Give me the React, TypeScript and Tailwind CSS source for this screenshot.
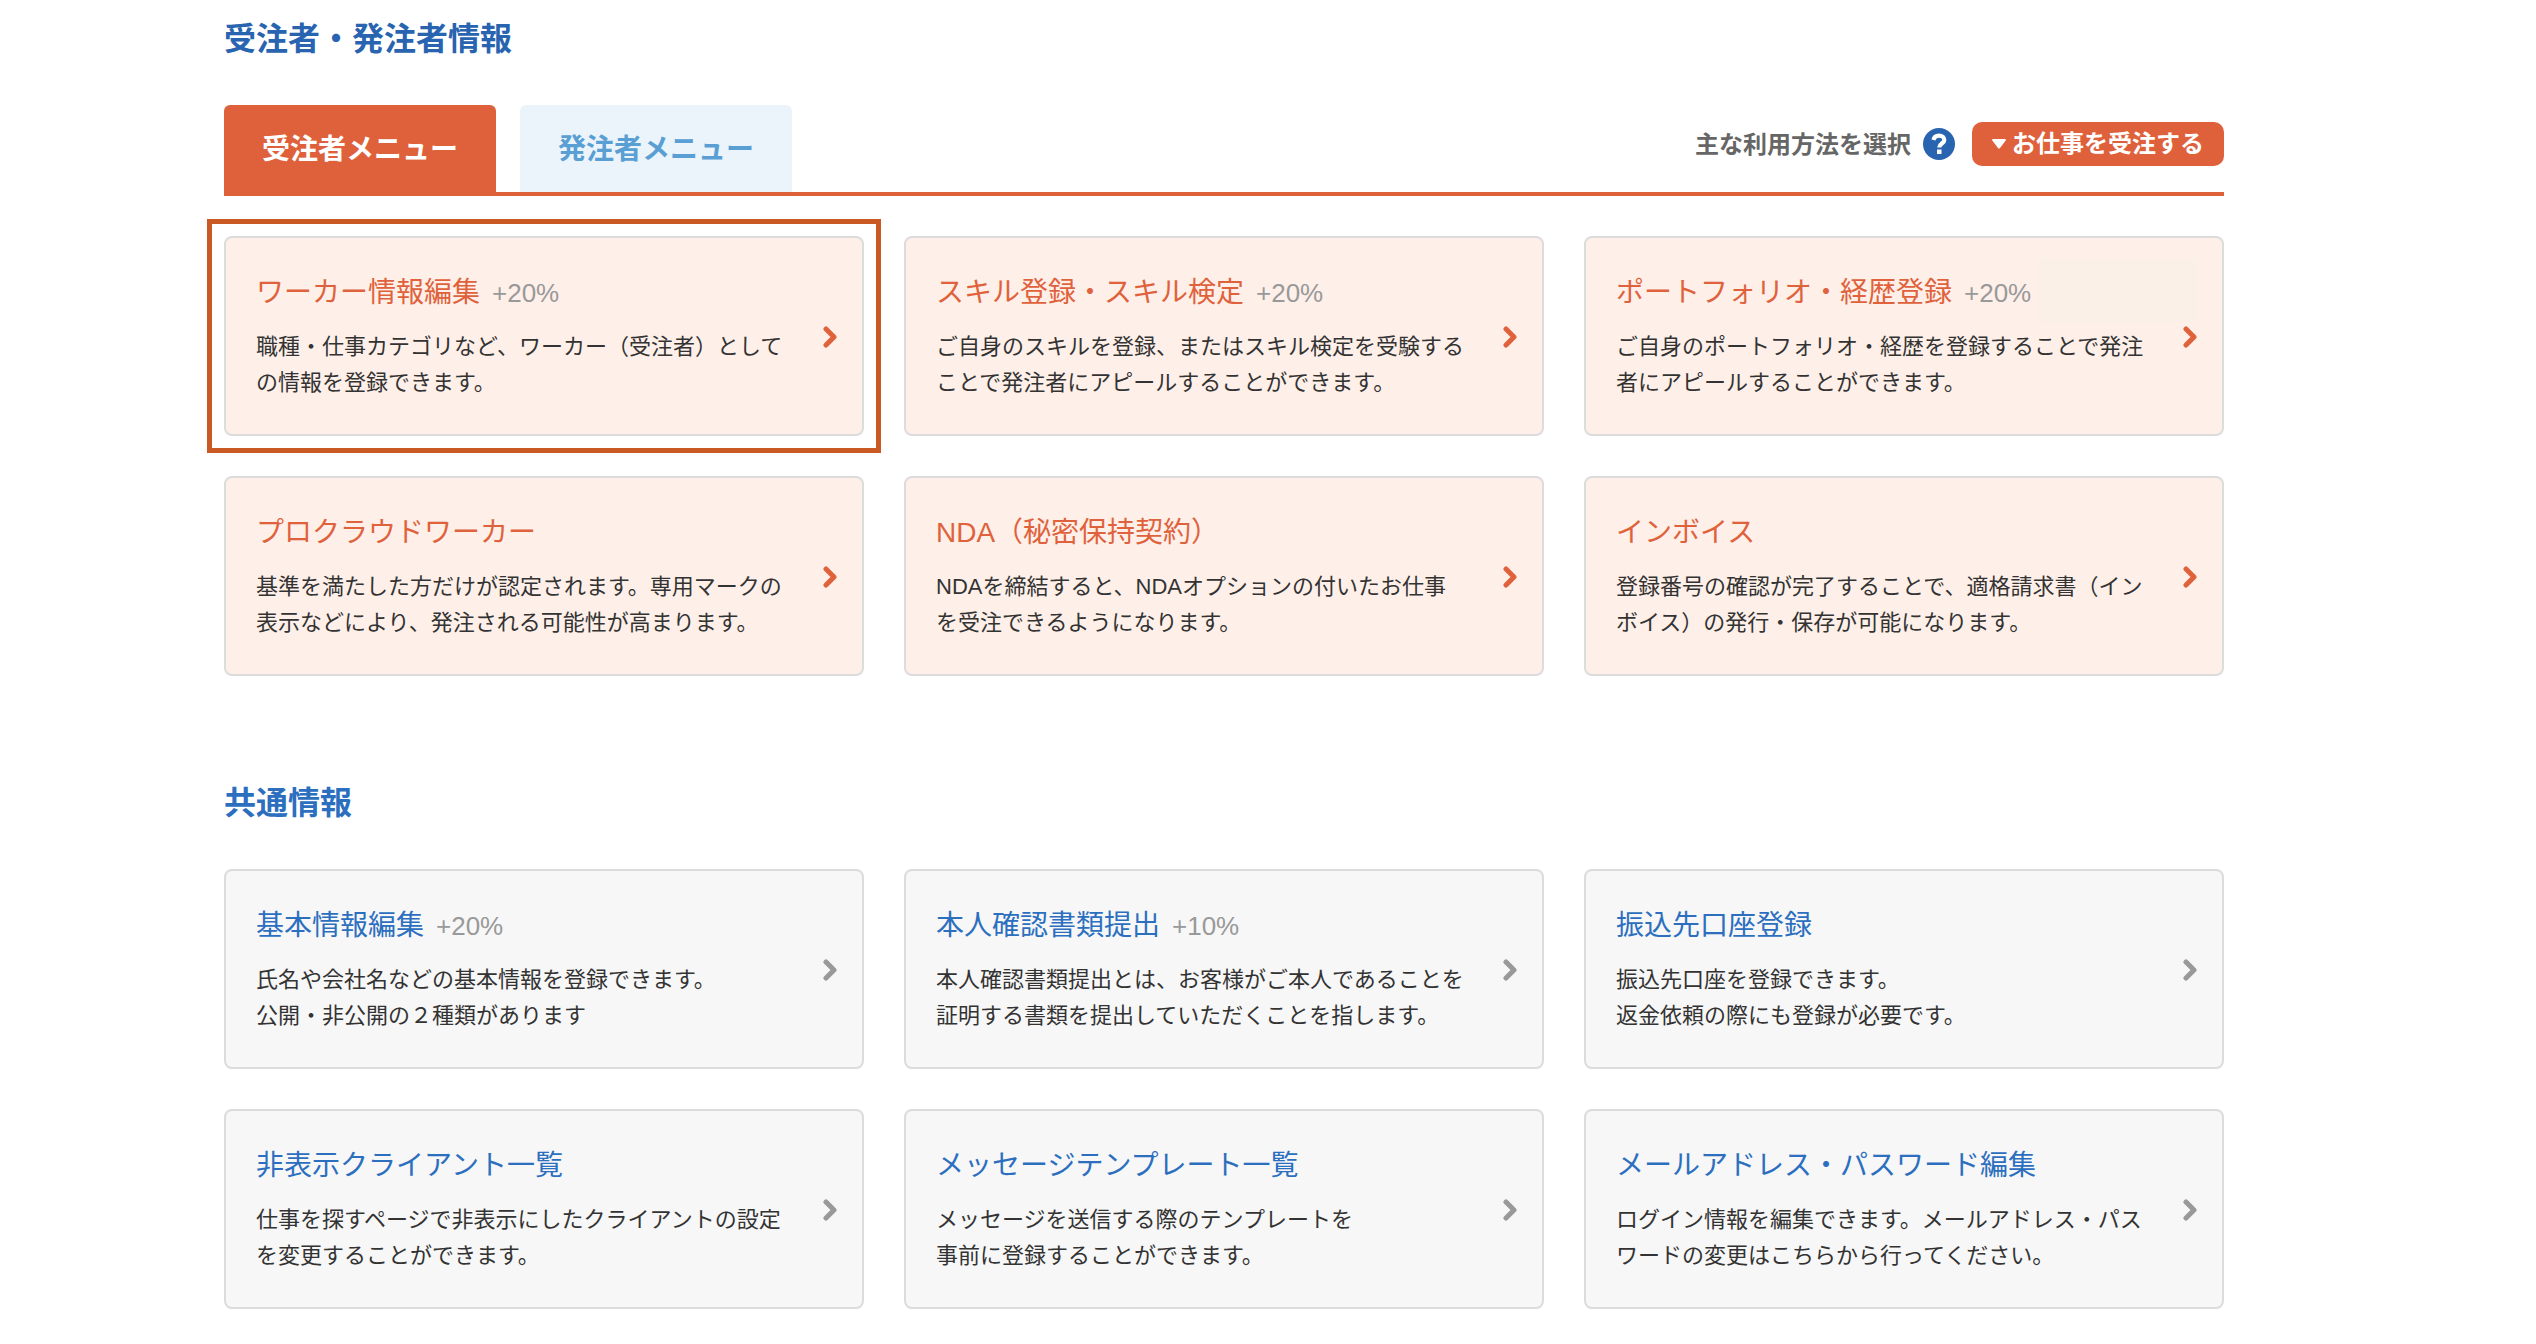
import { useState } from 'react'
import type { ReactNode } from 'react'

type Tone = 'worker' | 'common'

interface MenuItem {
  title: string
  lines: string[]
  percent?: string
  active?: boolean
  tag?: boolean
}

const workerItems: MenuItem[] = [
  {
    title: 'ワーカー情報編集',
    percent: '+20%',
    lines: ['職種・仕事カテゴリなど、ワーカー（受注者）として', 'の情報を登録できます。'],
    active: true,
  },
  {
    title: 'スキル登録・スキル検定',
    percent: '+20%',
    lines: ['ご自身のスキルを登録、またはスキル検定を受験する', 'ことで発注者にアピールすることができます。'],
  },
  {
    title: 'ポートフォリオ・経歴登録',
    percent: '+20%',
    lines: ['ご自身のポートフォリオ・経歴を登録することで発注', '者にアピールすることができます。'],
    tag: true,
  },
  {
    title: 'プロクラウドワーカー',
    lines: ['基準を満たした方だけが認定されます。専用マークの', '表示などにより、発注される可能性が高まります。'],
  },
  {
    title: 'NDA（秘密保持契約）',
    lines: ['NDAを締結すると、NDAオプションの付いたお仕事', 'を受注できるようになります。'],
  },
  {
    title: 'インボイス',
    lines: ['登録番号の確認が完了することで、適格請求書（イン', 'ボイス）の発行・保存が可能になります。'],
  },
]

const commonItems: MenuItem[] = [
  {
    title: '基本情報編集',
    percent: '+20%',
    lines: ['氏名や会社名などの基本情報を登録できます。', '公開・非公開の２種類があります'],
  },
  {
    title: '本人確認書類提出',
    percent: '+10%',
    lines: ['本人確認書類提出とは、お客様がご本人であることを', '証明する書類を提出していただくことを指します。'],
  },
  {
    title: '振込先口座登録',
    lines: ['振込先口座を登録できます。', '返金依頼の際にも登録が必要です。'],
  },
  {
    title: '非表示クライアント一覧',
    lines: ['仕事を探すページで非表示にしたクライアントの設定', 'を変更することができます。'],
  },
  {
    title: 'メッセージテンプレート一覧',
    lines: ['メッセージを送信する際のテンプレートを', '事前に登録することができます。'],
  },
  {
    title: 'メールアドレス・パスワード編集',
    lines: ['ログイン情報を編集できます。メールアドレス・パス', 'ワードの変更はこちらから行ってください。'],
  },
]

function Chevron() {
  return (
    <svg width="16" height="24" viewBox="0 0 16 24" fill="none" className="shrink-0" aria-hidden="true">
      <path d="M4 5l8 8-8 8" stroke="currentColor" strokeWidth="5" strokeLinecap="round" strokeLinejoin="round" />
    </svg>
  )
}

function Card({ item, tone }: { item: MenuItem; tone: Tone }) {
  const worker = tone === 'worker'

  return (
    <li className={item.active ? 'outline-[5px] outline-offset-[12px] outline-[#c95a24] outline-solid' : ''}>
      <a
        href="#"
        className={`relative flex h-full items-center justify-between rounded-lg border-2 border-[#dcdcdc] py-[33px] pr-6 pl-[30px] ${
          worker ? 'bg-[#fef0e9]' : 'bg-[#f7f7f7]'
        }`}
      >
        {item.tag && <span className="absolute top-5 right-6 h-16 w-40 bg-[#faf0e7]" />}
        <div>
          <h3 className="mb-3.5 flex h-11 items-center gap-3 text-[28px] leading-11">
            <span className={worker ? 'text-[#e0623c]' : 'text-[#2c6fbf]'}>{item.title}</span>
            {item.percent && <span className="text-[26px] text-[#999]">{item.percent}</span>}
          </h3>
          <p className="text-[22px] leading-9 whitespace-nowrap text-[#333]">
            {item.lines[0]}
            <br />
            {item.lines[1]}
          </p>
        </div>
        <span className={worker ? 'text-[#e0623c]' : 'text-[#999]'}>
          <Chevron />
        </span>
      </a>
    </li>
  )
}

function CardGrid({ items, tone }: { items: MenuItem[]; tone: Tone }) {
  return (
    <ul className="grid grid-cols-3 gap-10">
      {items.map((item) => (
        <Card key={item.title} item={item} tone={tone} />
      ))}
    </ul>
  )
}

function Tab({ active, onClick, children }: { active: boolean; onClick: () => void; children: ReactNode }) {
  return (
    <button
      type="button"
      role="tab"
      aria-selected={active}
      onClick={onClick}
      className={`h-[87px] rounded-t-md px-[38px] pt-0.5 text-[28px] font-bold ${
        active ? 'bg-[#de613c] text-white' : 'bg-[#ebf4fa] text-[#5a9fd4]'
      }`}
    >
      {children}
    </button>
  )
}

export default function App() {
  const [tab, setTab] = useState<'worker' | 'client'>('worker')

  return (
    <div className="min-h-screen bg-white font-['Liberation_Sans','Noto_Sans_CJK_JP',sans-serif]" lang="ja">
      <main className="pt-[17px] pr-[312px] pb-8 pl-[224px]">
        <h2 className="text-[32px] leading-11 font-bold text-[#2864b0]">受注者・発注者情報</h2>

        {/* Tabs */}
        <div className="mt-11 flex items-start justify-between border-b-4 border-[#de613c]">
          <div role="tablist" className="flex gap-6">
            <Tab active={tab === 'worker'} onClick={() => setTab('worker')}>
              受注者メニュー
            </Tab>
            <Tab active={tab === 'client'} onClick={() => setTab('client')}>
              発注者メニュー
            </Tab>
          </div>
          <div className="flex items-center pt-[17px] text-[24px]">
            <span className="pt-0.5 font-bold text-[#666]">主な利用方法を選択</span>
            <button type="button" aria-label="ヘルプ" className="ml-3 text-[#2864b0]">
              <svg width="32" height="32" viewBox="0 0 32 32" fill="none" aria-hidden="true">
                <circle cx="16" cy="16" r="16" fill="currentColor" />
                <path d="M10.500 12q.8-4.300 5.500-4.300c3.300 0 5.300 1.700 5.300 4.300 0 3.500-5.100 3.600-5.100 7.500" stroke="#fff" strokeWidth="4.200" />
                <rect x="14" y="21.500" width="4.500" height="4.500" fill="#fff" />
              </svg>
            </button>
            <button type="button" className="ml-[17px] flex h-11 items-center rounded-[10px] bg-[#de613c] px-5 font-bold text-white">
              <svg width="14" height="10" viewBox="0 0 14 10" className="mr-[6px]" aria-hidden="true">
                <path d="M1 0h12q1.500.5.500 1.800L8 9q-1 1-2 0L.5 1.800Q-.5.5 1 0z" fill="currentColor" />
              </svg>
              お仕事を受注する
            </button>
          </div>
        </div>

        <div className="mt-10">
          <CardGrid items={workerItems} tone="worker" />
        </div>

        <h2 className="mt-[105px] mb-11 text-[32px] leading-11 font-bold text-[#2c6fbf]">共通情報</h2>
        <CardGrid items={commonItems} tone="common" />
      </main>
    </div>
  )
}
